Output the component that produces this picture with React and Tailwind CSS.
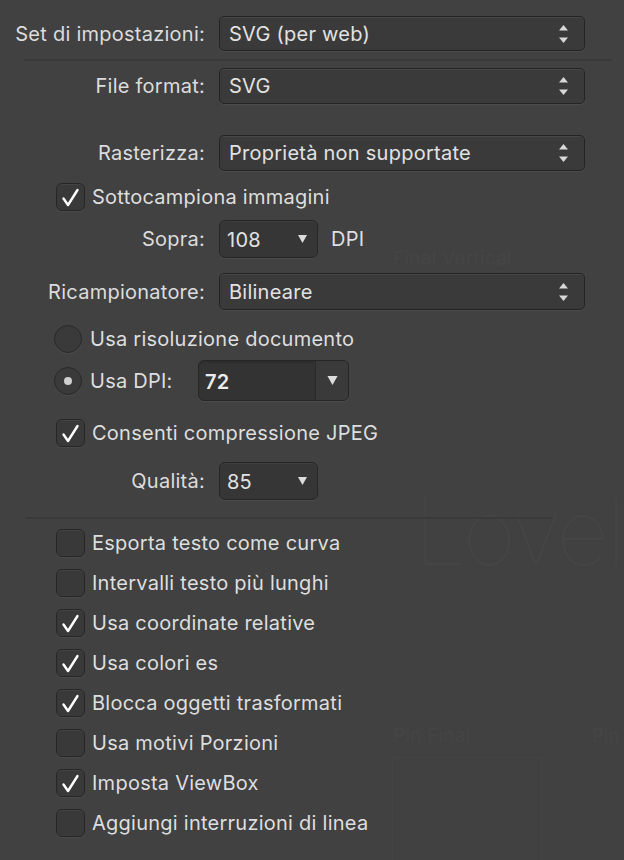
import React from "react";

const Stepper = () => (
  <svg width="9" height="18" viewBox="0 0 9 18" className="shrink-0">
    <polygon points="4.5,0 9,5.5 0,5.5" fill="#d8d8d8" />
    <polygon points="0,12.5 9,12.5 4.5,18" fill="#d8d8d8" />
  </svg>
);

const Down = ({ w = 9, h = 8 }) => (
  <svg width={w} height={h} viewBox="0 0 9 8" className="shrink-0">
    <polygon points="0,0 9,0 4.5,8" fill="#dcdcdc" />
  </svg>
);

const Select = ({ value, h = "h-[35px]" }) => (
  <div
    className={`${h} w-[366px] rounded-[5px] border border-[#242424] bg-[#3a3a3a] shadow-[0_1px_0_#4b4b4b,inset_0_1px_0_#474747] flex items-center justify-between pl-[9px] pr-[16px]`}
  >
    <span className="text-[#e2e2e2]">{value}</span>
    <Stepper />
  </div>
);

const SmallDrop = ({ value }) => (
  <div className="h-[38px] w-[99px] rounded-[6px] border border-[#262626] bg-[#363636] shadow-[0_1px_0_#4b4b4b,inset_0_1px_0_#3f3f3f] flex items-center justify-between pl-[7px] pr-[10px]">
    <span className="text-[#e2e2e2] pt-[2px]">{value}</span>
    <Down />
  </div>
);

const Label = ({ children }) => (
  <div className="w-[219px] shrink-0 pr-[14px] text-right text-[#dcdcdc] whitespace-nowrap">
    {children}
  </div>
);

const Check = ({ on, label }) => (
  <div className="flex items-center h-[28px]">
    <div className="ml-[56px] w-[29px] h-[28px] rounded-[6px] border border-[#262626] bg-[#393939] shadow-[0_1px_0_#4a4a4a,inset_0_1px_0_#444444] flex items-center justify-center shrink-0">
      {on && (
        <svg width="27" height="26" viewBox="0 0 27 26">
          <polyline
            points="6.5,14.5 11,21 20.5,6"
            fill="none"
            stroke="#ffffff"
            strokeWidth="2.4"
            strokeLinecap="round"
            strokeLinejoin="round"
          />
        </svg>
      )}
    </div>
    <span className="ml-[7px] text-[#dedede] whitespace-nowrap">{label}</span>
  </div>
);

const Radio = ({ on }) => (
  <div className="ml-[54px] w-[28px] h-[28px] rounded-full border border-[#282828] bg-[#3a3a3a] shadow-[0_1px_0_#4a4a4a] flex items-center justify-center shrink-0">
    {on && <div className="w-[8px] h-[8px] rounded-full bg-[#cfcfcf]" />}
  </div>
);

export default function App() {
  return (
    <div className="relative w-[624px] h-[860px] overflow-hidden bg-[#414141] font-['Inter',sans-serif] text-[20px] tracking-[0.25px] leading-none">
      {/* faint watermark behind the panel */}
      <div className="pointer-events-none absolute inset-0 select-none">
        <div className="absolute left-[393px] top-[249px] text-[19px] text-[#454545]">Final Vertical</div>
        <div className="absolute left-[414px] top-[486px] text-[92px] font-thin text-[#454545] tracking-[-3px]">Lovel</div>
        <div className="absolute left-[393px] top-[726px] text-[19px] text-[#454545]">Pin Final</div>
        <div className="absolute left-[592px] top-[727px] text-[18px] text-[#454545]">Pin</div>
        <div className="absolute left-[392px] top-[757px] w-[150px] h-[110px] border border-[#444444]" />
      </div>

      <div className="relative flex flex-col pt-[16px]">
        <div className="flex items-center">
          <Label>Set di impostazioni:</Label>
          <Select value="SVG (per web)" />
        </div>

        <div className="ml-[24px] mt-[8px] w-[588px] h-[2px] bg-[#3a3a3a]" />

        <div className="flex items-center mt-[7px]">
          <Label>File format:</Label>
          <Select value="SVG" h="h-[36px]" />
        </div>

        <div className="flex items-center mt-[31px]">
          <Label>Rasterizza:</Label>
          <Select value="Proprietà non supportate" h="h-[36px]" />
        </div>

        <div className="mt-[12px]">
          <Check on label="Sottocampiona immagini" />
        </div>

        <div className="flex items-center mt-[9px]">
          <Label>Sopra:</Label>
          <SmallDrop value="108" />
          <span className="ml-[13px] text-[#dedede]">DPI</span>
        </div>

        <div className="flex items-center mt-[15px]">
          <Label>Ricampionatore:</Label>
          <Select value="Bilineare" h="h-[37px]" />
        </div>

        <div className="flex items-center mt-[15px] h-[28px]">
          <Radio />
          <span className="ml-[8px] text-[#dedede]">Usa risoluzione documento</span>
        </div>

        <div className="flex items-center mt-[7px] h-[41px]">
          <Radio on />
          <span className="ml-[8px] text-[#dedede] w-[108px]">Usa DPI:</span>
          <div className="h-[41px] w-[151px] rounded-[6px] border border-[#262626] bg-[#333333] shadow-[0_1px_0_#4b4b4b,inset_0_2px_0_#2e2e2e] flex overflow-hidden">
            <div className="flex-1 flex items-center pl-[6px] pt-[3px] font-semibold text-[#ececec]">72</div>
            <div className="w-[33px] border-l border-[#2a2a2a] bg-[#3a3a3a] flex items-center justify-center">
              <Down w={11} h={9} />
            </div>
          </div>
        </div>

        <div className="mt-[18px]">
          <Check on label="Consenti compressione JPEG" />
        </div>

        <div className="flex items-center mt-[15px]">
          <Label>Qualità:</Label>
          <SmallDrop value="85" />
        </div>

        <div className="ml-[26px] mt-[17px] w-[526px] h-[2px] bg-[#3a3a3a]" />

        <div className="flex flex-col gap-[12px] mt-[10px]">
          <Check label="Esporta testo come curva" />
          <Check label="Intervalli testo più lunghi" />
          <Check on label="Usa coordinate relative" />
          <Check on label="Usa colori es" />
          <Check on label="Blocca oggetti trasformati" />
          <Check label="Usa motivi Porzioni" />
          <Check on label="Imposta ViewBox" />
          <Check label="Aggiungi interruzioni di linea" />
        </div>
      </div>
    </div>
  );
}
